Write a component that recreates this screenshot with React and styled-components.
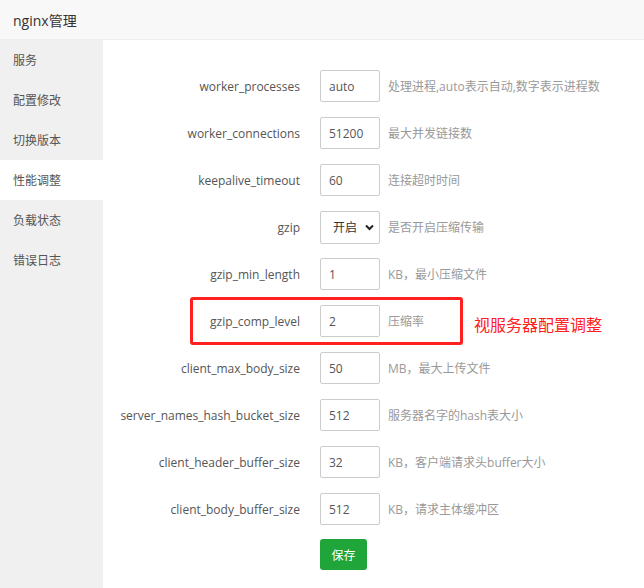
import React from "react";
import styled, { createGlobalStyle } from "styled-components";

const Global = createGlobalStyle`
  html, body { margin: 0; padding: 0; background: #fff; }
  body { font-family: "Open Sans", "Noto Sans CJK SC", sans-serif; font-size: 12px; color: #555; }
  * { box-sizing: border-box; }
`;

const Page = styled.div`
  width: 644px;
  height: 588px;
  display: flex;
  flex-direction: column;
  overflow: hidden;
`;

const Header = styled.div`
  height: 40px;
  flex: none;
  background: #f8f8f8;
  border-bottom: 1px solid #eee;
  display: flex;
  align-items: center;
  padding-left: 13px;
  font-size: 14px;
  color: #333;
`;

const Body = styled.div`
  flex: 1;
  display: flex;
  min-height: 0;
`;

const Sidebar = styled.div`
  width: 103px;
  flex: none;
  background: #f0f0f0;
  display: flex;
  flex-direction: column;
`;

const NavItem = styled.div`
  height: 40px;
  display: flex;
  align-items: center;
  padding-left: 13px;
  font-size: 12px;
  color: #555;
  background: ${(p) => (p.$active ? "#fff" : "transparent")};
`;

const Content = styled.div`
  flex: 1;
  position: relative;
  padding: 30px 0 0 15px;
  display: flex;
  flex-direction: column;
`;

const Row = styled.div`
  display: flex;
  align-items: center;
  height: 32px;
  margin-bottom: 15px;
`;

const Label = styled.div`
  width: 182px;
  flex: none;
  text-align: right;
  margin-right: 20px;
  font-size: 12px;
  color: #555;
  white-space: nowrap;
`;

const Input = styled.input`
  width: 60px;
  height: 32px;
  border: 1px solid #ccc;
  border-radius: 2px;
  padding: 0 8px;
  font-family: "Open Sans", "Noto Sans CJK SC", sans-serif;
  font-size: 12px;
  color: #555;
  outline: none;
  background: #fff;
`;

const SelectWrap = styled.div`
  position: relative;
  width: 60px;
  height: 33px;
`;

const Select = styled.select`
  appearance: none;
  width: 60px;
  height: 33px;
  border: 1px solid #ccc;
  border-radius: 2px;
  padding: 0 0 0 12px;
  font-family: "Open Sans", "Noto Sans CJK SC", sans-serif;
  font-size: 12px;
  color: #333;
  background: #fff;
  outline: none;
`;

const Chevron = styled.svg`
  position: absolute;
  right: 6px;
  top: 13px;
  width: 9px;
  height: 7px;
  pointer-events: none;
`;

const Help = styled.span`
  margin-left: 8px;
  font-size: 12px;
  color: #999;
  white-space: nowrap;
`;

const Actions = styled.div`
  padding-left: 202px;
  margin-top: -1px;
`;

const SaveButton = styled.button`
  width: 47px;
  height: 31px;
  border: none;
  border-radius: 3px;
  background: #20a53a;
  color: #fff;
  font-family: "Open Sans", "Noto Sans CJK SC", sans-serif;
  font-size: 12px;
  padding: 0;
`;

const Highlight = styled.div`
  position: absolute;
  left: 87px;
  top: 257px;
  width: 273px;
  height: 48px;
  border: 3px solid #ff2020;
  border-radius: 3px;
  pointer-events: none;
`;

const Note = styled.div`
  position: absolute;
  left: 371px;
  top: 272px;
  font-size: 16px;
  color: #ff2020;
  font-family: "Noto Sans CJK SC", sans-serif;
  white-space: nowrap;
`;

const nav = ["服务", "配置修改", "切换版本", "性能调整", "负载状态", "错误日志"];

const rows = [
  { label: "worker_processes", value: "auto", help: "处理进程,auto表示自动,数字表示进程数" },
  { label: "worker_connections", value: "51200", help: "最大并发链接数" },
  { label: "keepalive_timeout", value: "60", help: "连接超时时间" },
  { label: "gzip", select: true, help: "是否开启压缩传输" },
  { label: "gzip_min_length", value: "1", help: "KB，最小压缩文件" },
  { label: "gzip_comp_level", value: "2", help: "压缩率" },
  { label: "client_max_body_size", value: "50", help: "MB，最大上传文件" },
  { label: "server_names_hash_bucket_size", value: "512", help: "服务器名字的hash表大小" },
  { label: "client_header_buffer_size", value: "32", help: "KB，客户端请求头buffer大小" },
  { label: "client_body_buffer_size", value: "512", help: "KB，请求主体缓冲区" },
];

export default function App() {
  return (
    <>
      <Global />
      <Page>
        <Header>nginx管理</Header>
        <Body>
          <Sidebar>
            {nav.map((n) => (
              <NavItem key={n} $active={n === "性能调整"}>
                {n}
              </NavItem>
            ))}
          </Sidebar>
          <Content>
            {rows.map((r) => (
              <Row key={r.label}>
                <Label>{r.label}</Label>
                {r.select ? (
                  <SelectWrap>
                    <Select defaultValue="on">
                      <option value="on">开启</option>
                      <option value="off">关闭</option>
                    </Select>
                    <Chevron viewBox="0 0 9 7">
                      <path d="M1 1.5 L4.5 5 L8 1.5" fill="none" stroke="#222" strokeWidth="2" />
                    </Chevron>
                  </SelectWrap>
                ) : (
                  <Input defaultValue={r.value} />
                )}
                <Help>{r.help}</Help>
              </Row>
            ))}
            <Actions>
              <SaveButton>保存</SaveButton>
            </Actions>
            <Highlight />
            <Note>视服务器配置调整</Note>
          </Content>
        </Body>
      </Page>
    </>
  );
}
